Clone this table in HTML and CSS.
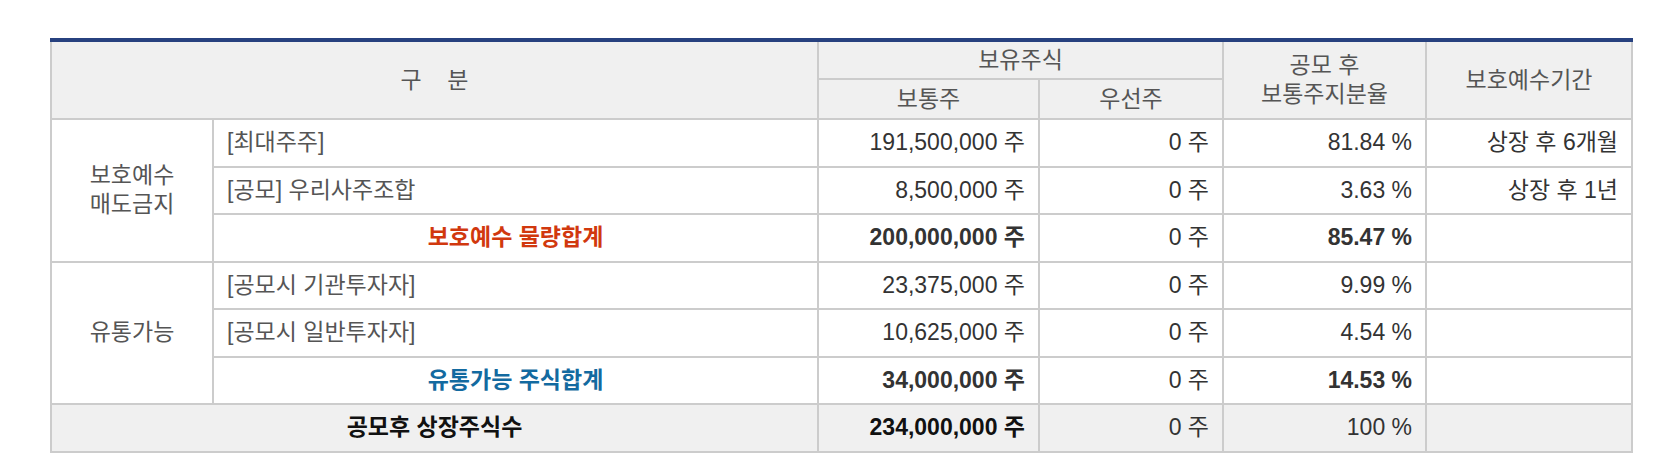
FILE: index.html
```html
<!DOCTYPE html>
<html lang="ko">
<head>
<meta charset="utf-8">
<link rel="stylesheet" href="styles.css">
</head>
<body>
<div class="wrap">
<table class="shares">
  <colgroup>
    <col class="c1"><col class="c2"><col class="c3"><col class="c4"><col class="c5"><col class="c6">
  </colgroup>
  <thead>
    <tr class="h1">
      <th colspan="2" rowspan="2">구&nbsp;&nbsp;&nbsp;&nbsp;분</th>
      <th colspan="2">보유주식</th>
      <th rowspan="2">공모 후<br>보통주지분율</th>
      <th rowspan="2">보호예수기간</th>
    </tr>
    <tr class="h2">
      <th>보통주</th>
      <th>우선주</th>
    </tr>
  </thead>
  <tbody>
    <tr>
      <td rowspan="3" class="grp">보호예수<br>매도금지</td>
      <td class="name">[최대주주]</td>
      <td class="num">191,500,000 주</td>
      <td class="num">0 주</td>
      <td class="num">81.84 %</td>
      <td class="num">상장 후 6개월</td>
    </tr>
    <tr>
      <td class="name">[공모] 우리사주조합</td>
      <td class="num">8,500,000 주</td>
      <td class="num">0 주</td>
      <td class="num">3.63 %</td>
      <td class="num">상장 후 1년</td>
    </tr>
    <tr>
      <td class="sum red">보호예수 물량합계</td>
      <td class="num b">200,000,000 주</td>
      <td class="num">0 주</td>
      <td class="num b">85.47 %</td>
      <td class="num"></td>
    </tr>
    <tr>
      <td rowspan="3" class="grp">유통가능</td>
      <td class="name">[공모시 기관투자자]</td>
      <td class="num">23,375,000 주</td>
      <td class="num">0 주</td>
      <td class="num">9.99 %</td>
      <td class="num"></td>
    </tr>
    <tr>
      <td class="name">[공모시 일반투자자]</td>
      <td class="num">10,625,000 주</td>
      <td class="num">0 주</td>
      <td class="num">4.54 %</td>
      <td class="num"></td>
    </tr>
    <tr>
      <td class="sum blue">유통가능 주식합계</td>
      <td class="num b">34,000,000 주</td>
      <td class="num">0 주</td>
      <td class="num b">14.53 %</td>
      <td class="num"></td>
    </tr>
    <tr class="total">
      <td colspan="2" class="tlabel">공모후 상장주식수</td>
      <td class="num b dark">234,000,000 주</td>
      <td class="num">0 주</td>
      <td class="num">100 %</td>
      <td class="num"></td>
    </tr>
  </tbody>
</table>
</div>
</body>
</html>
```

FILE: styles.css
```css
html, body {
  margin: 0;
  padding: 0;
  background: #fff;
}
.wrap {
  padding: 38px 0 0 50px;
}
.shares {
  border-collapse: collapse;
  table-layout: fixed;
  width: 1581px;
  font-family: "Liberation Sans", Arial, "Noto Sans CJK KR", sans-serif;
  font-size: 23px;
  color: #333;
  border-top: 4px solid #27417f;
}
.c1 { width: 162px; }
.c2 { width: 605px; }
.c3 { width: 221px; }
.c4 { width: 184px; }
.c5 { width: 203px; }
.c6 { width: 206px; }

.shares th,
.shares td {
  border: 2px solid #cccccc;
  padding: 0 13px;
  line-height: 29px;
}
.shares tr:first-child th { border-top: 0; }
.shares th {
  background: #f0f0f0;
  font-weight: normal;
  color: #555;
  text-align: center;
}
.h1 th { height: 36px; }
.h2 th { height: 38px; }
.shares td { height: 45.5px; }

.grp {
  text-align: center;
  color: #555;
}
.name {
  text-align: left;
  color: #555;
}
.num {
  text-align: right;
}
.sum {
  text-align: center;
  font-weight: bold;
}
.red { color: #d1380e; }
.blue { color: #136aa0; }
.b { font-weight: bold; }
.dark { color: #111; }
.total td {
  background: #f0f0f0;
}
.tlabel {
  text-align: center;
  font-weight: bold;
  color: #111;
}
```
